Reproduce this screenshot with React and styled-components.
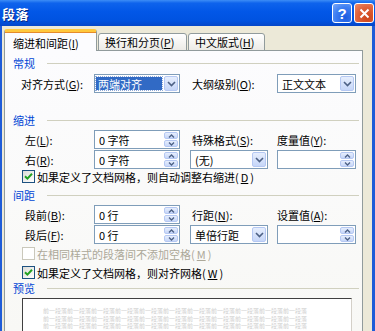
import React from "react";
import styled, { createGlobalStyle } from "styled-components";

const Global = createGlobalStyle`
  html, body { margin: 0; padding: 0; background: #ECE9D8; }
  body { font-family: "Noto Sans CJK SC", "Liberation Sans", sans-serif; }
  * { box-sizing: border-box; }
`;

const Window = styled.div`
  width: 375px;
  height: 331px;
  overflow: hidden;
  display: flex;
  flex-direction: column;
  background: #ECE9D8;
  font-size: 11px;
  color: #000;
`;

const TitleBar = styled.div`
  flex: none;
  height: 26px;
  display: flex;
  align-items: center;
  justify-content: space-between;
  padding: 0 1px 0 2px;
  background: linear-gradient(to bottom, #3D8DF6 0%, #0E63EC 12%, #0257E7 45%, #0052E0 80%, #0546C8 100%);
`;

const Title = styled.span`
  color: #fff;
  font-weight: bold;
  font-size: 13px;
  letter-spacing: 0.5px;
  text-shadow: 1px 1px 0 #0A2A85;
`;

const CapButtons = styled.div`
  display: flex;
  gap: 2px;
`;

const CapButton = styled.div`
  width: 20px;
  height: 20px;
  border: 1px solid #fff;
  border-radius: 3px;
  display: flex;
  align-items: center;
  justify-content: center;
  color: #fff;
  font-family: "Liberation Sans", sans-serif;
  font-weight: bold;
  font-size: 15px;
  background: ${(p) =>
    p.$close
      ? "radial-gradient(circle at 70% 75%, #CC4419 0%, #E0623A 55%, #EE8D6D 100%)"
      : "radial-gradient(circle at 70% 75%, #1E5CE0 0%, #3D7EF2 55%, #79A8F8 100%)"};
`;

const Frame = styled.div`
  flex: 1;
  display: flex;
  flex-direction: column;
  border-left: 2px solid #1F5CD8;
  border-right: 3px solid #1F5CD8;
  padding: 3px 9px 0 2px;
  min-height: 0;
`;

const Tabs = styled.div`
  display: flex;
  align-items: flex-end;
  height: 22px;
  margin-bottom: -1px;
  position: relative;
  z-index: 1;
`;

const Tab = styled.div`
  width: ${(p) => p.$w}px;
  height: ${(p) => (p.$active ? 22 : 18)}px;
  display: flex;
  align-items: center;
  padding-left: ${(p) => p.$pad}px;
  padding-top: ${(p) => (p.$active ? 2 : 0)}px;
  border: 1px solid #919B9C;
  border-bottom: ${(p) => (p.$active ? "none" : "1px solid #919B9C")};
  border-top: ${(p) => (p.$active ? "3px solid #FFC83C" : "1px solid #919B9C")};
  border-radius: 3px 3px 0 0;
  background: ${(p) => (p.$active ? "#FCFCFE" : "linear-gradient(#FFFFFF, #ECEBE6)")};
  box-shadow: ${(p) => (p.$active ? "inset 0 1px 0 #E68B2C" : "none")};
  white-space: nowrap;
  margin-right: 1px;
`;

const Panel = styled.div`
  flex: 1;
  border: 1px solid #919B9C;
  border-bottom: none;
  background: linear-gradient(#FCFCFE, #F8F8F5);
  display: flex;
  flex-direction: column;
  min-height: 0;
  overflow: hidden;
`;

const GroupHeader = styled.div`
  display: flex;
  align-items: center;
  height: 12px;
  padding-left: 8px;
  margin-right: 3px;
  margin-top: ${(p) => p.$mt}px;
  color: #0046D5;
  &::after {
    content: "";
    flex: 1;
    height: 1px;
    margin-left: 12px;
    background: #D0D0BF;
  }
`;

const FormGrid = styled.div`
  display: grid;
  grid-template-columns: 73px 86px 10px 78px 9px 79px;
  grid-auto-rows: 19px;
  row-gap: 1px;
  margin-left: 16px;
  margin-top: ${(p) => p.$mt}px;
  align-items: center;
`;

const Label = styled.span`
  padding-left: ${(p) => p.$indent || 0}px;
  grid-column: ${(p) => p.$col};
  white-space: nowrap;
  color: ${(p) => (p.$disabled ? "#ACA899" : "#000")};
`;

const Field = styled.div`
  grid-column: ${(p) => p.$col};
  height: 19px;
  border: 1px solid #7F9DB9;
  background: #fff;
  display: flex;
  align-items: center;
  padding: 1px;
`;

const FieldText = styled.span`
  flex: 1;
  padding-left: 3px;
  white-space: pre;
  overflow: hidden;
`;

const Selected = styled.span`
  flex: 1;
  margin-right: 2px;
  height: 13px;
  display: flex;
  align-items: center;
  padding-left: 2px;
  background: #316AC5;
  color: #fff;
  outline: 1px dotted #8FA9D8;
  white-space: nowrap;
`;

const DropButton = styled.div`
  width: 14px;
  height: 15px;
  border: 1px solid #B5C8F3;
  border-radius: 2px;
  background: linear-gradient(#E6EEFD, #C6D6F8);
  display: flex;
  align-items: center;
  justify-content: center;
`;

const SpinBox = styled.div`
  width: 14px;
  height: 15px;
  display: flex;
  flex-direction: column;
  gap: 1px;
`;

const SpinHalf = styled.div`
  flex: 1;
  border: 1px solid #B5C8F3;
  border-radius: 2px;
  background: linear-gradient(#E6EEFD, #C6D6F8);
  display: flex;
  align-items: center;
  justify-content: center;
`;

const CheckRow = styled.div`
  display: flex;
  align-items: center;
  gap: 2px;
  height: 13px;
  margin-left: 17px;
  margin-top: ${(p) => p.$mt}px;
  color: ${(p) => (p.$disabled ? "#ACA899" : "#000")};
  white-space: nowrap;
`;

const Box = styled.div`
  width: 13px;
  height: 13px;
  flex: none;
  border: 1px solid ${(p) => (p.$disabled ? "#CAC8BB" : "#1C5180")};
  background: ${(p) => (p.$disabled ? "#fff" : "linear-gradient(135deg, #DCDCD7, #FFFFFF)")};
  display: flex;
  align-items: center;
  justify-content: center;
`;

const Preview = styled.div`
  margin-left: 17px;
  margin-top: 4px;
  width: 330px;
  flex: 1;
  min-height: 0;
  background: #fff;
  border-top: 1px solid #404040;
  border-left: 1px solid #404040;
  border-right: 1px solid #D4D0C8;
  padding: 8px 0 0 20px;
  display: flex;
  flex-direction: column;
`;

const PreviewLine = styled.div`
  font-size: 6px;
  line-height: 7.5px;
  color: #CFCFCF;
  white-space: nowrap;
`;

const Chevron = () => (
  <svg width="9" height="6" viewBox="0 0 9 6">
    <path d="M1 1 L4.5 4.5 L8 1" fill="none" stroke="#4D6185" strokeWidth="1.6" />
  </svg>
);

const Tri = ({ up }) => (
  <svg width="7" height="4" viewBox="0 0 7 4">
    <path d={up ? "M1 3.5 L3.5 1 L6 3.5" : "M1 0.5 L3.5 3 L6 0.5"} fill="none" stroke="#4D6185" strokeWidth="1.3" />
  </svg>
);

const Check = () => (
  <svg width="9" height="9" viewBox="0 0 9 9">
    <path d="M1 4.2 L3.4 6.6 L8 1.8" fill="none" stroke="#21A121" strokeWidth="2" />
  </svg>
);

const Select = ({ col, value, selected }) => (
  <Field $col={col}>
    {selected ? <Selected>{value}</Selected> : <FieldText>{value}</FieldText>}
    <DropButton>
      <Chevron />
    </DropButton>
  </Field>
);

const Spinner = ({ col, value }) => (
  <Field $col={col}>
    <FieldText>{value}</FieldText>
    <SpinBox>
      <SpinHalf>
        <Tri up />
      </SpinHalf>
      <SpinHalf>
        <Tri />
      </SpinHalf>
    </SpinBox>
  </Field>
);

const L = ({ text, k, col, indent, disabled }) => (
  <Label $col={col} $indent={indent} $disabled={disabled}>
    {text}(<u>{k}</u>):
  </Label>
);

const previewText = "前一段落前一段落前一段落前一段落前一段落前一段落前一段落前一段落前一段落前一段落前一段落";

export default function App() {
  return (
    <>
      <Global />
      <Window>
        <TitleBar>
          <Title>段落</Title>
          <CapButtons>
            <CapButton>?</CapButton>
            <CapButton $close>
              <svg width="11" height="11" viewBox="0 0 11 11">
                <path d="M1.5 1.5 L9.5 9.5 M9.5 1.5 L1.5 9.5" stroke="#fff" strokeWidth="2" />
              </svg>
            </CapButton>
          </CapButtons>
        </TitleBar>
        <Frame>
          <Tabs>
            <Tab $active $w={93} $pad={8}>
              缩进和间距(<u>I</u>)
            </Tab>
            <Tab $w={89} $pad={6}>
              换行和分页(<u>P</u>)
            </Tab>
            <Tab $w={77} $pad={6}>
              中文版式(<u>H</u>)
            </Tab>
          </Tabs>
          <Panel>
            <GroupHeader $mt={6}>常规</GroupHeader>
            <FormGrid $mt={5}>
              <L text="对齐方式" k="G" col="1" />
              <Select col="2" value="两端对齐" selected />
              <L text="大纲级别" k="O" col="4" indent={2} />
              <Select col="6" value="正文文本" />
            </FormGrid>

            <GroupHeader $mt={21}>缩进</GroupHeader>
            <FormGrid $mt={4}>
              <L text="左" k="L" col="1" indent={4} />
              <Spinner col="2" value="0 字符" />
              <L text="特殊格式" k="S" col="4" indent={2} />
              <L text="度量值" k="Y" col="6" />
              <L text="右" k="R" col="1" indent={4} />
              <Spinner col="2" value="0 字符" />
              <Select col="4" value="(无)" />
              <Spinner col="6" value="" />
            </FormGrid>
            <CheckRow $mt={1}>
              <Box>
                <Check />
              </Box>
              如果定义了文档网格，则自动调整右缩进(<u>D</u>)
            </CheckRow>

            <GroupHeader $mt={6}>间距</GroupHeader>
            <FormGrid $mt={4}>
              <L text="段前" k="B" col="1" indent={4} />
              <Spinner col="2" value="0 行" />
              <L text="行距" k="N" col="4" indent={2} />
              <L text="设置值" k="A" col="6" />
              <L text="段后" k="F" col="1" indent={4} />
              <Spinner col="2" value="0 行" />
              <Select col="4" value="单倍行距" />
              <Spinner col="6" value="" />
            </FormGrid>
            <CheckRow $mt={3} $disabled>
              <Box $disabled />
              在相同样式的段落间不添加空格(<u>M</u>)
            </CheckRow>
            <CheckRow $mt={6}>
              <Box>
                <Check />
              </Box>
              如果定义了文档网格，则对齐网格(<u>W</u>)
            </CheckRow>

            <GroupHeader $mt={3}>预览</GroupHeader>
            <Preview>
              <PreviewLine>{previewText}</PreviewLine>
              <PreviewLine>{previewText}</PreviewLine>
              <PreviewLine>{previewText}</PreviewLine>
            </Preview>
          </Panel>
        </Frame>
      </Window>
    </>
  );
}
